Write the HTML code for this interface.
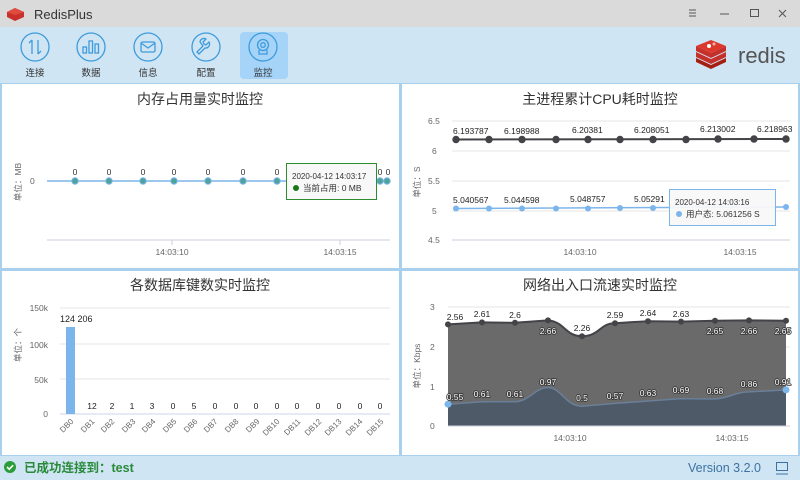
<!DOCTYPE html>
<html><head><meta charset="utf-8"><style>
html,body{margin:0;padding:0;width:800px;height:480px;overflow:hidden;background:#fff}
svg{display:block}
text{font-family:"Liberation Sans","Noto Sans CJK SC",sans-serif}
.wl{paint-order:stroke;stroke:#333;stroke-width:1.6;stroke-linejoin:round;fill:#fff}
</style></head><body>
<svg width="800" height="480" viewBox="0 0 800 480" xmlns="http://www.w3.org/2000/svg">
<rect x="0" y="0" width="800" height="27" fill="#dadada"/>
<g transform="translate(7,8)">
<path d="M0 4 L8 0 L17 4 L17 9 L8 13 L0 9Z" fill="#c9302c"/>
<path d="M0 4 L8 7 L17 4 L8 0Z" fill="#e04a3f"/>
</g>
<text x="34" y="19" font-size="13" fill="#333">RedisPlus</text>
<g stroke="#555" stroke-width="1" fill="none">
<path d="M689 10h7M689 13h7M689 16h7"/>
<path d="M720 14h9"/>
<rect x="750.5" y="9.5" width="8" height="7"/>
<path d="M779 10l7 7M786 10l-7 7"/>
</g>
<rect x="0" y="27" width="800" height="56" fill="#cfe5f4"/>
<rect x="240" y="32" width="48" height="47" rx="4" fill="#a5d4f8"/>
<g fill="none" stroke="#3d9bdb" stroke-width="1.3">
<circle cx="35" cy="47" r="14"/><circle cx="91" cy="47" r="14"/><circle cx="148" cy="47" r="14"/><circle cx="206" cy="47" r="14"/><circle cx="263" cy="47" r="14"/>
<path d="M32 40v14M29 43l3-3M38 54v-14M41 51l-3 3"/>
<rect x="83" y="47" width="3.5" height="6"/><rect x="89" y="41" width="3.5" height="12"/><rect x="95" y="44" width="3.5" height="9"/>
<rect x="141" y="42" width="14" height="10" rx="1.5"/><path d="M141 43l7 5 7-5"/>
<path d="M200 42a4 4 0 0 1 6-3l-3 3 1 2 2 1 3-3a4 4 0 0 1-4 6l-6 6-2-2 6-6z"/>
<circle cx="263" cy="45" r="5.5"/><circle cx="263" cy="45" r="2.3"/><path d="M259 50v4h8v-4"/>
</g>
<g font-size="9.5" fill="#333" text-anchor="middle">
<text x="35" y="76">连接</text><text x="91" y="76">数据</text><text x="148" y="76">信息</text><text x="206" y="76">配置</text><text x="263" y="76">监控</text>
</g>
<g transform="translate(696,40)">
<path d="M0 18 L15 25 L30 18 L30 22 L15 29 L0 22Z" fill="#a41e11"/>
<path d="M0 12 L15 19 L30 12 L30 17 L15 24 L0 17Z" fill="#c6302b"/>
<path d="M0 6 L15 13 L30 6 L30 11 L15 18 L0 11Z" fill="#c6302b"/>
<path d="M0 6 L15 0 L30 6 L15 13Z" fill="#dc382c"/>
<circle cx="13" cy="6" r="2" fill="#fff"/><circle cx="18" cy="4" r="1.5" fill="#f5b5a5"/>
</g>
<text x="738" y="63" font-size="22" fill="#555">redis</text>

<rect x="0" y="83" width="800" height="373" fill="#a8cfec"/>
<rect x="2" y="84" width="397" height="184" fill="#fff"/>
<rect x="402" y="84" width="396" height="184" fill="#fff"/>
<rect x="2" y="271" width="397" height="184" fill="#fff"/>
<rect x="402" y="271" width="396" height="184" fill="#fff"/>

<g font-size="14" fill="#333" text-anchor="middle">
<text x="200" y="104">内存占用量实时监控</text>
<text x="600" y="104">主进程累计CPU耗时监控</text>
<text x="200" y="290">各数据库键数实时监控</text>
<text x="600" y="290">网络出入口流速实时监控</text>
</g>

<g font-size="8.5" fill="#666">
<text transform="translate(21,182) rotate(-90)" text-anchor="middle">单位：MB</text>
<text x="30" y="184">0</text>
<text x="172" y="255" text-anchor="middle">14:03:10</text>
<text x="340" y="255" text-anchor="middle">14:03:15</text>
</g>
<line x1="47" y1="240" x2="390" y2="240" stroke="#ccd" />
<line x1="172" y1="240" x2="172" y2="245" stroke="#ccd"/><line x1="340" y1="240" x2="340" y2="245" stroke="#ccd"/>
<line x1="47" y1="181" x2="388" y2="181" stroke="#7cb5ec" stroke-width="1.5"/>
<g fill="#4da39a" stroke="#7cb5ec">
<circle cx="75" cy="181" r="3.2"/><circle cx="109" cy="181" r="3.2"/><circle cx="143" cy="181" r="3.2"/><circle cx="174" cy="181" r="3.2"/><circle cx="208" cy="181" r="3.2"/><circle cx="243" cy="181" r="3.2"/><circle cx="277" cy="181" r="3.2"/><circle cx="380" cy="181" r="3.2"/><circle cx="387" cy="181" r="3.2"/>
</g>
<g font-size="8.5" fill="#333" text-anchor="middle">
<text x="75" y="175">0</text><text x="109" y="175">0</text><text x="143" y="175">0</text><text x="174" y="175">0</text><text x="208" y="175">0</text><text x="243" y="175">0</text><text x="277" y="175">0</text><text x="380" y="175">0</text><text x="388" y="175">0</text>
</g>
<rect x="286.5" y="163.5" width="90" height="36" fill="#f8f8f8" stroke="#2e8b2e"/>
<text x="292" y="179" font-size="8" fill="#333">2020-04-12 14:03:17</text>
<circle cx="296" cy="188" r="3" fill="#187818"/>
<text x="303" y="191" font-size="8.5" fill="#333">当前占用: 0 MB</text>

<g font-size="8.5" fill="#666">
<text transform="translate(420,182) rotate(-90)" text-anchor="middle">单位：S</text>
<text x="428" y="124">6.5</text><text x="432" y="154">6</text><text x="428" y="184">5.5</text><text x="432" y="214">5</text><text x="428" y="243">4.5</text>
<text x="580" y="255" text-anchor="middle">14:03:10</text><text x="740" y="255" text-anchor="middle">14:03:15</text>
</g>
<g stroke="#e6e6e6"><line x1="452" y1="121" x2="790" y2="121"/><line x1="452" y1="151" x2="790" y2="151"/><line x1="452" y1="181" x2="790" y2="181"/><line x1="452" y1="211" x2="790" y2="211"/></g>
<line x1="452" y1="240" x2="790" y2="240" stroke="#ccd"/>
<polyline points="456,139.5 786,139" stroke="#434348" stroke-width="2" fill="none"/>
<g fill="#434348"><circle cx="456" cy="139.5" r="3.7"/><circle cx="489" cy="139.5" r="3.7"/><circle cx="522" cy="139.5" r="3.7"/><circle cx="556" cy="139.5" r="3.7"/><circle cx="588" cy="139.5" r="3.7"/><circle cx="620" cy="139.5" r="3.7"/><circle cx="653" cy="139.5" r="3.7"/><circle cx="686" cy="139.5" r="3.7"/><circle cx="718" cy="139" r="3.7"/><circle cx="754" cy="139" r="3.7"/><circle cx="786" cy="139" r="3.7"/></g>
<polyline points="456,208.5 786,207" stroke="#7cb5ec" stroke-width="1.5" fill="none"/>
<g fill="#7cb5ec"><circle cx="456" cy="208.5" r="3"/><circle cx="489" cy="208.5" r="3"/><circle cx="522" cy="208.5" r="3"/><circle cx="556" cy="208.5" r="3"/><circle cx="588" cy="208.5" r="3"/><circle cx="620" cy="208" r="3"/><circle cx="653" cy="208" r="3"/><circle cx="786" cy="207" r="3"/></g>
<g font-size="8.5" fill="#222">
<text x="453" y="134">6.193787</text><text x="504" y="134">6.198988</text><text x="572" y="133">6.20381</text><text x="634" y="133">6.208051</text><text x="700" y="132">6.213002</text><text x="757" y="132">6.218963</text>
<text x="453" y="203">5.040567</text><text x="504" y="203">5.044598</text><text x="570" y="202">5.048757</text><text x="634" y="202">5.05291</text>
</g>
<rect x="669.5" y="189.5" width="106" height="36" fill="#f8f8f8" fill-opacity="0.95" stroke="#7cb5ec"/>
<text x="675" y="205" font-size="8" fill="#333">2020-04-12 14:03:16</text>
<circle cx="679" cy="214" r="3" fill="#7cb5ec"/>
<text x="686" y="217" font-size="8.5" fill="#333">用户态: 5.061256 S</text>

<g font-size="8.5" fill="#666">
<text transform="translate(21,345) rotate(-90)" text-anchor="middle">单位：个</text>
<text x="48" y="311" text-anchor="end">150k</text><text x="48" y="348" text-anchor="end">100k</text><text x="48" y="383" text-anchor="end">50k</text><text x="48" y="417" text-anchor="end">0</text>
</g>
<g stroke="#e6e6e6"><line x1="60" y1="308" x2="390" y2="308"/><line x1="60" y1="344" x2="390" y2="344"/><line x1="60" y1="379" x2="390" y2="379"/></g>
<line x1="60" y1="414" x2="390" y2="414" stroke="#ccd6eb"/>
<rect x="66" y="327" width="9" height="87" fill="#7cb5ec"/>
<text x="60" y="322" font-size="9" fill="#222">124 206</text>
<g font-size="8.5" fill="#222" text-anchor="middle">
<text x="92" y="409">12</text><text x="112" y="409">2</text><text x="132" y="409">1</text><text x="152" y="409">3</text><text x="173" y="409">0</text><text x="194" y="409">5</text><text x="215" y="409">0</text><text x="236" y="409">0</text><text x="256" y="409">0</text><text x="277" y="409">0</text><text x="297" y="409">0</text><text x="318" y="409">0</text><text x="339" y="409">0</text><text x="360" y="409">0</text><text x="380" y="409">0</text>
</g>
<g font-size="8" fill="#666" text-anchor="end">
<text transform="translate(74,422) rotate(-45)">DB0</text><text transform="translate(95,422) rotate(-45)">DB1</text><text transform="translate(115,422) rotate(-45)">DB2</text><text transform="translate(136,422) rotate(-45)">DB3</text><text transform="translate(156,422) rotate(-45)">DB4</text><text transform="translate(177,422) rotate(-45)">DB5</text><text transform="translate(198,422) rotate(-45)">DB6</text><text transform="translate(218,422) rotate(-45)">DB7</text><text transform="translate(239,422) rotate(-45)">DB8</text><text transform="translate(260,422) rotate(-45)">DB9</text><text transform="translate(280,422) rotate(-45)">DB10</text><text transform="translate(301,422) rotate(-45)">DB11</text><text transform="translate(322,422) rotate(-45)">DB12</text><text transform="translate(342,422) rotate(-45)">DB13</text><text transform="translate(363,422) rotate(-45)">DB14</text><text transform="translate(384,422) rotate(-45)">DB15</text>
</g>

<g font-size="8.5" fill="#666">
<text transform="translate(420,366) rotate(-90)" text-anchor="middle">单位：Kbps</text>
<text x="430" y="310">3</text><text x="430" y="350">2</text><text x="430" y="390">1</text><text x="430" y="429">0</text>
<text x="570" y="441" text-anchor="middle">14:03:10</text><text x="732" y="441" text-anchor="middle">14:03:15</text>
</g>
<g stroke="#e6e6e6"><line x1="448" y1="307" x2="790" y2="307"/><line x1="448" y1="347" x2="790" y2="347"/><line x1="448" y1="387" x2="790" y2="387"/></g>
<path d="M448 324.4 L482 322.4 L515 322.8 L548 320.4 C565 322 565 336 582 336.3 C600 336 600 323 615 323.2 L648 321.2 L681 321.6 L715 320.8 L749 320.4 L786 320.8 L786 426 L448 426Z" fill="#6a6a6a"/>
<path d="M448 324.4 L482 322.4 L515 322.8 L548 320.4 C565 322 565 336 582 336.3 C600 336 600 323 615 323.2 L648 321.2 L681 321.6 L715 320.8 L749 320.4 L786 320.8" fill="none" stroke="#434348" stroke-width="2"/>
<path d="M448 404.2 L482 401.8 L515 401.8 C530 401 535 387.5 548 387.5 C562 388 565 406 582 406.2 L615 403.4 L648 401 L681 398.6 L715 399 C730 398 735 392 749 391.9 L786 389.9 L786 426 L448 426Z" fill="#4f5a68"/>
<path d="M448 404.2 L482 401.8 L515 401.8 C530 401 535 387.5 548 387.5 C562 388 565 406 582 406.2 L615 403.4 L648 401 L681 398.6 L715 399 C730 398 735 392 749 391.9 L786 389.9" fill="none" stroke="#6a7f99" stroke-width="1.5"/>
<line x1="448" y1="426" x2="790" y2="426" stroke="#ccd"/>
<g fill="#434348"><circle cx="448" cy="324.4" r="3"/><circle cx="482" cy="322.4" r="3"/><circle cx="515" cy="322.8" r="3"/><circle cx="548" cy="320.4" r="3"/><circle cx="582" cy="336.3" r="3"/><circle cx="615" cy="323.2" r="3"/><circle cx="648" cy="321.2" r="3"/><circle cx="681" cy="321.6" r="3"/><circle cx="715" cy="320.8" r="3"/><circle cx="749" cy="320.4" r="3"/><circle cx="786" cy="320.8" r="3"/></g>
<g fill="#7cb5ec"><circle cx="448" cy="404.2" r="3.5"/><circle cx="786" cy="389.9" r="3.5"/></g>
<g font-size="8.5" fill="#222" text-anchor="middle">
<text x="455" y="320">2.56</text><text x="482" y="317">2.61</text><text x="515" y="318">2.6</text><text x="582" y="331">2.26</text><text x="615" y="318">2.59</text><text x="648" y="316">2.64</text><text x="681" y="317">2.63</text>
</g>
<g font-size="8.5" text-anchor="middle" class="wl">
<text class="wl" x="548" y="334">2.66</text><text class="wl" x="715" y="334">2.65</text><text class="wl" x="749" y="334">2.66</text><text class="wl" x="783" y="334">2.65</text>
<text class="wl" x="455" y="400">0.55</text><text class="wl" x="482" y="397">0.61</text><text class="wl" x="515" y="397">0.61</text><text class="wl" x="548" y="385">0.97</text><text class="wl" x="582" y="401">0.5</text><text class="wl" x="615" y="399">0.57</text><text class="wl" x="648" y="396">0.63</text><text class="wl" x="681" y="393">0.69</text><text class="wl" x="715" y="394">0.68</text><text class="wl" x="749" y="387">0.86</text><text class="wl" x="783" y="385">0.91</text>
</g>

<rect x="0" y="456" width="800" height="24" fill="#cfe5f4"/>
<circle cx="10" cy="467" r="6" fill="#2a9d3a"/>
<path d="M7 467l2.2 2.2 4-4" stroke="#fff" stroke-width="1.6" fill="none"/>
<text x="24" y="472" font-size="12.5" font-weight="bold" fill="#2a8a3a">已成功连接到：test</text>
<text x="688" y="472" font-size="12.5" fill="#3b72a3">Version 3.2.0</text>
<rect x="776.5" y="462.5" width="11" height="8" fill="none" stroke="#3b72a3"/>
<path d="M776 474h12" stroke="#3b72a3"/>
</svg>
</body></html>
